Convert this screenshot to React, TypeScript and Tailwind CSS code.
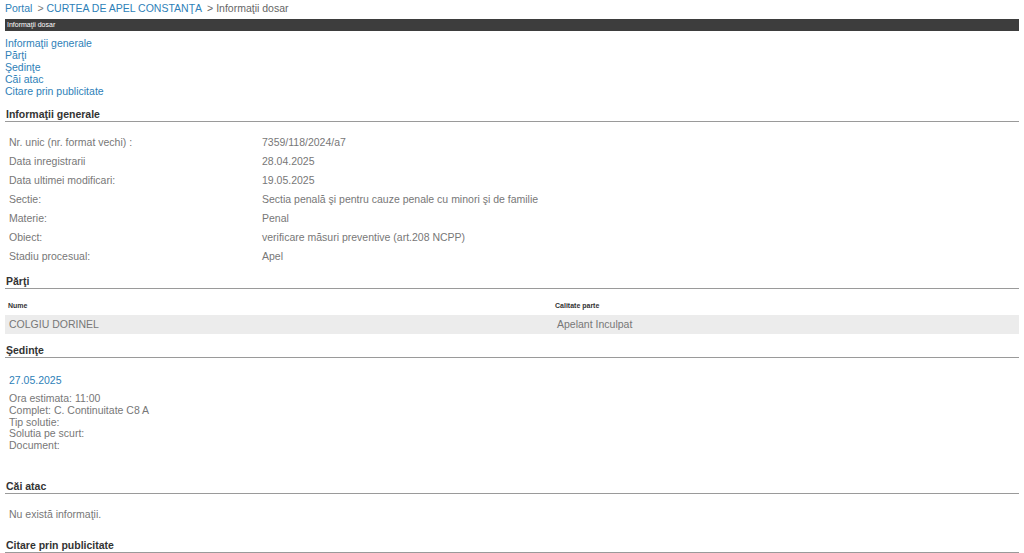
const infoRows: [string, string][] = [
  ["Nr. unic (nr. format vechi) :", "7359/118/2024/a7"],
  ["Data inregistrarii", "28.04.2025"],
  ["Data ultimei modificari:", "19.05.2025"],
  ["Sectie:", "Sectia penală şi pentru cauze penale cu minori şi de familie"],
  ["Materie:", "Penal"],
  ["Obiect:", "verificare măsuri preventive (art.208 NCPP)"],
  ["Stadiu procesual:", "Apel"],
];

const links = ["Informaţii generale", "Părţi", "Şedinţe", "Căi atac", "Citare prin publicitate"];

function SectionTitle({ children, className = "" }: { children: React.ReactNode; className?: string }) {
  return (
    <div
      className={`border-b border-[#9a9a9a] text-[10.5px] font-bold leading-[14px] text-[#333] ${className}`}
    >
      <span className="pl-[1px]">{children}</span>
    </div>
  );
}

export default function App() {
  return (
    <div className="min-h-[553px] bg-white px-[5px] pt-[1px] font-['Liberation_Sans',Arial,sans-serif] text-[10.5px]">
      {/* breadcrumb */}
      <div className="flex h-[14px] items-center leading-[14px]">
        <a className="text-[#2e7fb8]">Portal</a>
        <span className="ml-[5px] text-[#777]">&gt;&nbsp;</span>
        <a className="text-[#2e7fb8]">CURTEA DE APEL CONSTANŢA</a>
        <span className="ml-[5px] text-[#666]">&gt; Informaţii dosar</span>
      </div>

      <div className="mt-[4px] flex h-[12px] items-center bg-[#3d3d3d] pl-[2px] text-[7px] text-white">
        Informaţii dosar
      </div>

      {/* anchors */}
      <div className="mt-[6px] flex flex-col leading-[12px]">
        {links.map((l) => (
          <a key={l} className="text-[#2e7fb8]">
            {l}
          </a>
        ))}
      </div>

      <SectionTitle className="mt-[10px]">Informaţii generale</SectionTitle>
      <div className="mt-[11px] flex flex-col text-[#777]">
        {infoRows.map(([label, value]) => (
          <div key={label} className="grid grid-cols-[253px_1fr] pl-[4px] leading-[19px]">
            <span>{label}</span>
            <span>{value}</span>
          </div>
        ))}
      </div>

      <SectionTitle className="mt-[8px]">Părţi</SectionTitle>
      <div className="mt-[10px]">
        <div className="grid h-[16px] grid-cols-[547px_1fr] text-[7px] font-bold leading-[14px] text-[#333]">
          <span className="pl-[3px]">Nume</span>
          <span className="pl-[3px]">Calitate parte</span>
        </div>
        <div className="grid h-[19px] grid-cols-[547px_1fr] items-center bg-[#ececec] leading-[19px] text-[#777]">
          <span className="pl-[4px]">COLGIU DORINEL</span>
          <span className="pl-[5px]">Apelant Inculpat</span>
        </div>
      </div>

      <SectionTitle className="mt-[9px]">Şedinţe</SectionTitle>
      <div className="mt-[15px] pl-[4px] leading-[14px] text-[#2e7fb8]">27.05.2025</div>
      <div className="mt-[6px] flex flex-col pl-[4px] leading-[11.75px] text-[#777]">
        <span>Ora estimata: 11:00</span>
        <span>Complet: C. Continuitate C8 A</span>
        <span>Tip solutie:</span>
        <span>Solutia pe scurt:</span>
        <span>Document:</span>
      </div>

      <SectionTitle className="mt-[27px]">Căi atac</SectionTitle>
      <div className="mt-[13px] pl-[4px] leading-[14px] text-[#777]">Nu există informaţii.</div>

      <SectionTitle className="mt-[17px]">Citare prin publicitate</SectionTitle>
    </div>
  );
}
